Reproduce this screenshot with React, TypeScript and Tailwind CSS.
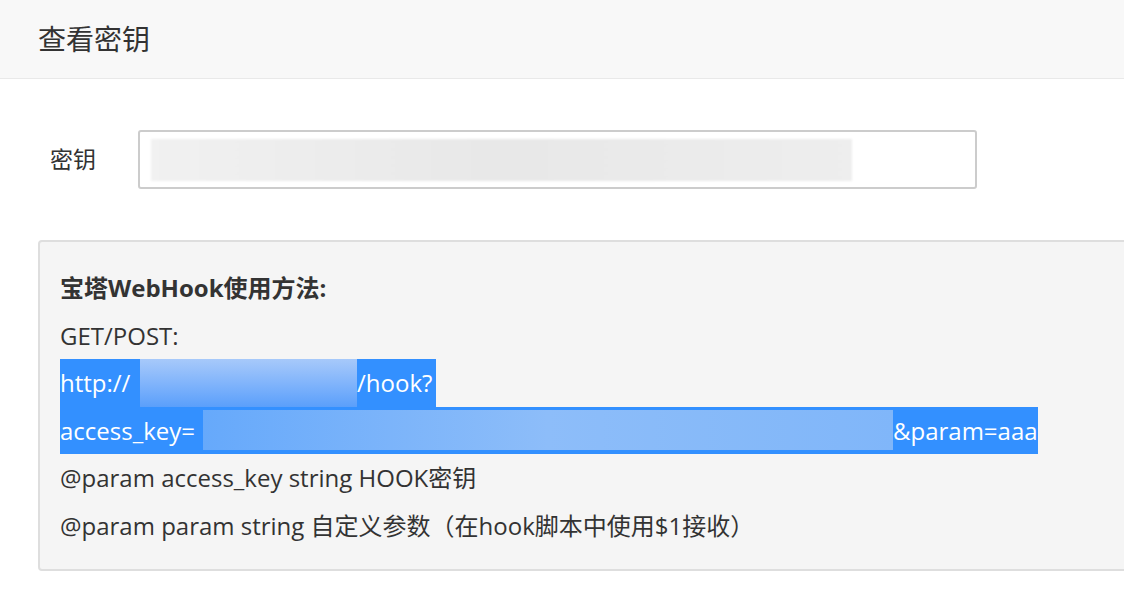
const font = { fontFamily: '"Open Sans", "Noto Sans CJK SC", sans-serif' };

export default function App() {
  return (
    <div className="min-h-[597px] w-[1124px] overflow-hidden bg-white text-[#333]" style={font}>
      <div className="flex h-[79px] items-center border-b border-[#e9e9e9] bg-[#f8f8f8] pl-[38px]">
        <h1 className="text-[28px] font-normal text-[#333]">查看密钥</h1>
      </div>

      <div className="flex items-center pt-[51px]">
        <label className="w-[138px] pl-[50px] text-[23px] text-[#333]">密钥</label>
        <div className="flex h-[59px] w-[839px] items-center rounded-[3px] border-2 border-[#ccc] px-[11px]">
          <div className="h-[42px] w-[701px] bg-gradient-to-r from-[#f1f1f1] via-[#e8e8e8] to-[#eeeeee] blur-[1px]" />
        </div>
      </div>

      <div className="ml-[38px] mt-[51px] w-[1110px] rounded-[4px] border-2 border-[#dedede] bg-[#f5f5f5] pb-[20px] pl-[20px] pt-[22px] text-[24px] leading-[47.5px]">
        <p className="font-bold">宝塔WebHook使用方法:</p>
        <p>GET/POST:</p>
        <div className="flex w-fit items-stretch bg-[#3390ff] text-white">
          <span className="w-[80px]">http://</span>
          <span className="w-[217px] bg-gradient-to-b from-[#a7c9fa] to-[#5a9ffb]" />
          <span className="pr-[4px]">/hook?</span>
        </div>
        <div className="flex w-fit items-center bg-[#3390ff] text-white">
          <span className="w-[143px]">access_key=</span>
          <span className="h-[40px] w-[690px] bg-gradient-to-r from-[#66a9fb] via-[#8dbdf9] to-[#80b6f9]" />
          <span>&amp;param=aaa</span>
        </div>
        <p>@param access_key string HOOK密钥</p>
        <p>@param param string 自定义参数（在hook脚本中使用$1接收）</p>
      </div>
    </div>
  );
}
